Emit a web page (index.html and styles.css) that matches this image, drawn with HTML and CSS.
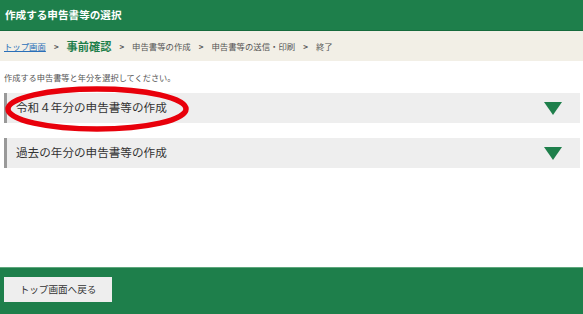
FILE: index.html
```html
<!DOCTYPE html>
<html>

<head>
    <meta charset="UTF-8">
    <title>作成する申告書等の選択</title>
    <link rel="stylesheet" href="styles.css">
</head>

<body>
    <div class='header'>作成する申告書等の選択</div>
    <div class='crumbs'>
        <a class='crumb-link' href='#'>トップ画面</a>
        <span class='sep'>&gt;</span>
        <span class='crumb-now'>事前確認</span>
        <span class='sep'>&gt;</span>
        <span class='crumb'>申告書等の作成</span>
        <span class='sep'>&gt;</span>
        <span class='crumb'>申告書等の送信・印刷</span>
        <span class='sep'>&gt;</span>
        <span class='crumb'>終了</span>
    </div>
    <div class='main'>
        <p class='lead'>作成する申告書等と年分を選択してください。</p>
        <div class='acc'>
            <span class='acc-title'>令和４年分の申告書等の作成</span>
            <span class='tri'></span>
        </div>
        <div class='acc'>
            <span class='acc-title'>過去の年分の申告書等の作成</span>
            <span class='tri'></span>
        </div>
        <svg class='mark' width='186' height='48' viewBox='0 0 186 48'>
            <ellipse cx='93' cy='24' rx='89' ry='20' fill='none' stroke='#e8000b' stroke-width='5.5' />
        </svg>
    </div>
    <div class='footer'>
        <div class='button'>トップ画面へ戻る</div>
    </div>
</body>

</html>
```

FILE: styles.css
```css
html,
body {
    padding: 0;
    margin: 0;
    background: #fff;
    font-family: "Noto Sans CJK JP", "Liberation Sans", sans-serif;
}

.header {
    height: 30px;
    line-height: 30px;
    padding-left: 5px;
    background: #1e7f4b;
    border-bottom: 1px solid #166a3c;
    color: #fff;
    font-size: 10.6px;
    font-weight: bold;
}

.crumbs {
    height: 30px;
    display: flex;
    align-items: center;
    padding-left: 4px;
    background: #f2efe6;
    font-size: 8.4px;
    color: #555;
}

.crumb-link {
    color: #2a6fb8;
    text-decoration: underline;
}

.sep {
    margin: 0 8px;
    font-weight: bold;
    font-size: 8px;
    color: #555;
}

.crumb-now {
    color: #1e7f4b;
    font-weight: bold;
    font-size: 11.2px;
}

.main {
    position: relative;
    height: 206px;
    padding: 0 3px 0 4px;
}

.lead {
    margin: 0;
    padding-top: 10px;
    height: 22px;
    line-height: 12px;
    font-size: 8.2px;
    color: #555;
}

.acc {
    height: 30px;
    margin-bottom: 15px;
    display: flex;
    align-items: center;
    justify-content: space-between;
    background: #eeeeee;
    border-left: 3px solid #999;
    padding: 0 18px 0 9px;
}

.acc-title {
    font-size: 11.6px;
    color: #333;
    padding-bottom: 2px;
}

.tri {
    width: 0;
    height: 0;
    border-left: 9.5px solid transparent;
    border-right: 9.5px solid transparent;
    border-top: 13px solid #1e7f4b;
}

.mark {
    position: absolute;
    left: 4px;
    top: 24px;
}

.footer {
    height: 48px;
    box-sizing: border-box;
    border-top: 1px solid #5ea77c;
    border-bottom: 1px solid #166a3c;
    background: #1e7f4b;
    padding: 9px 0 0 4px;
}

.button {
    width: 108px;
    height: 25px;
    line-height: 25px;
    background: #eeeeee;
    text-align: center;
    font-size: 9.6px;
    color: #333;
}
```
